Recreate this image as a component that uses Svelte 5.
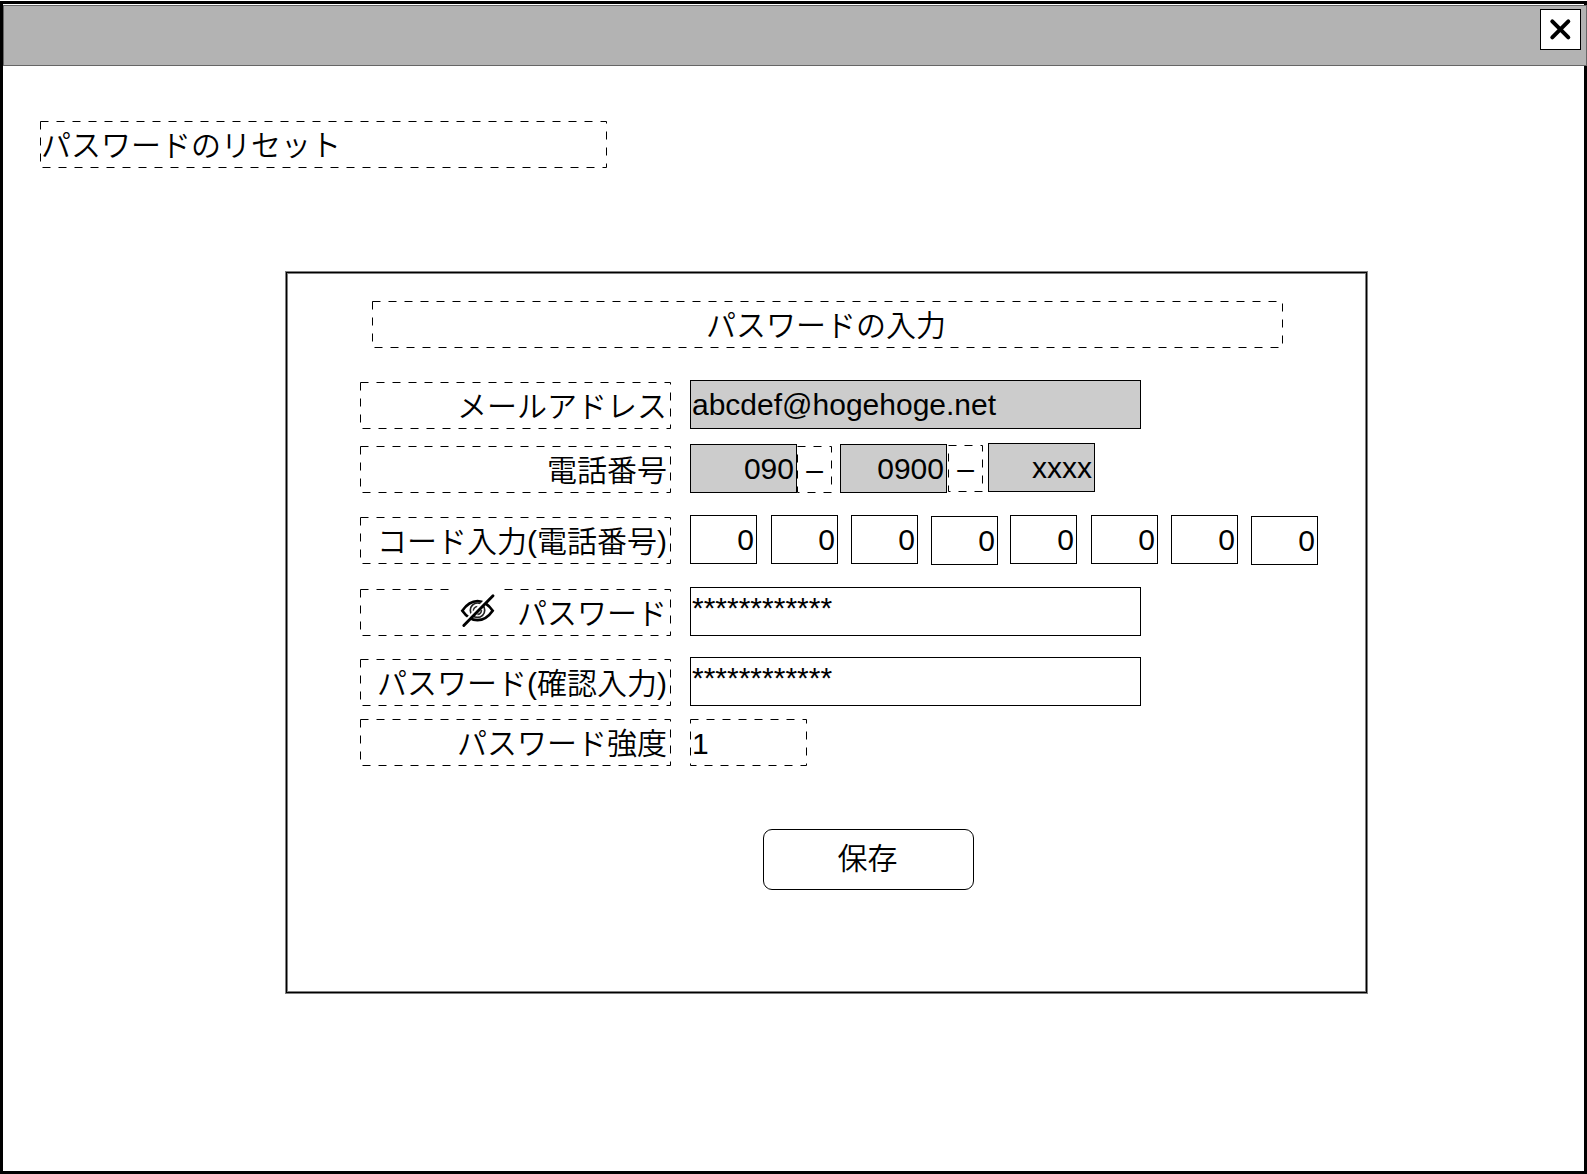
<script>
  const phone = [
    { kind: 'field', text: '090', gap: 0, drop: 1 },
    { kind: 'sep', text: '–', gap: 0, drop: 3 },
    { kind: 'field', text: '0900', gap: 8, drop: 1 },
    { kind: 'sep', text: '–', gap: 1, drop: 2 },
    { kind: 'field', text: 'xxxx', gap: 5, drop: 0 }
  ];
  const code = [
    { gap: 0, drop: 0 },
    { gap: 14, drop: 0 },
    { gap: 13, drop: 0 },
    { gap: 13, drop: 1 },
    { gap: 12, drop: 0 },
    { gap: 14, drop: 0 },
    { gap: 13, drop: 0 },
    { gap: 13, drop: 1 }
  ];
</script>

{#snippet outline(w)}
  <svg class="outline" width={w + 1} height="47" aria-hidden="true">
    <rect x="0.5" y="0.5" width={w} height="46" />
  </svg>
{/snippet}

{#snippet label(text)}
  <div class="dashed label">{@render outline(310)}<span>{text}</span></div>
{/snippet}

<div class="page">
  <main class="window">
    <header>
      <button class="close" aria-label="閉じる">
        <svg width="39" height="39" viewBox="0 0 39 39">
          <path d="M11.3 11.3 27.3 27.3M27.3 11.3 11.3 27.3" />
        </svg>
      </button>
    </header>

    <h1 class="dashed">{@render outline(566)}<span>パスワードのリセット</span></h1>

    <section class="panel">
      <h2 class="dashed">{@render outline(910)}<span>パスワードの入力</span></h2>

      <div class="rows">
        <div class="row">
          {@render label('メールアドレス')}
          <div class="field wide readonly"><span>abcdef@hogehoge.net</span></div>
        </div>

        <div class="row phone">
          {@render label('電話番号')}
          <div class="group">
            {#each phone as part}
              {#if part.kind === 'field'}
                <div class="field part readonly" style="margin-left:{part.gap}px;margin-top:{part.drop}px"><span>{part.text}</span></div>
              {:else}
                <div class="dashed sep" style="margin-left:{part.gap}px;margin-top:{part.drop}px">{@render outline(34)}<span>{part.text}</span></div>
              {/if}
            {/each}
          </div>
        </div>

        <div class="row">
          {@render label('コード入力(電話番号)')}
          <div class="group">
            {#each code as cell}
              <div class="field digit" style="margin-left:{cell.gap}px;margin-top:{cell.drop}px"><span>0</span></div>
            {/each}
          </div>
        </div>

        <div class="row">
          <div class="dashed label">
            {@render outline(310)}
            <svg class="eye" width="53" height="44" viewBox="0 0 53 44" aria-hidden="true">
              <path d="M12.3 24.7Q19 15.2 27.5 15.2T42.7 24.7Q36 34.2 27.5 34.2T12.3 24.7Z" stroke-width="2.7" />
              <circle cx="27.5" cy="24.2" r="7.2" stroke="#222" stroke-width="1.7" />
              <path d="M23.6 25.4a4 4 0 0 1 3.8-4.8M31.4 24a4 4 0 0 1-4 4.4" stroke="#333" stroke-width="1.6" />
              <path d="M12.6 38.4 41.4 8.8" stroke="#fff" stroke-width="3.4" />
              <path d="M13.8 39.4 43 9.8" stroke-width="2.9" stroke-linecap="round" />
            </svg>
            <span>パスワード</span>
          </div>
          <div class="field wide mask"><span>************</span></div>
        </div>

        <div class="row">
          {@render label('パスワード(確認入力)')}
          <div class="field wide mask"><span>************</span></div>
        </div>

        <div class="row strength">
          {@render label('パスワード強度')}
          <div class="dashed value">{@render outline(116)}<span>1</span></div>
        </div>
      </div>

      <button class="save">保存</button>
    </section>
  </main>
</div>

<style>
  :global(body) {
    background: #fff;
  }

  .page,
  .page * {
    box-sizing: border-box;
  }

  .page {
    width: 1587px;
    height: 1174px;
    padding-top: 1px;
    overflow: hidden;
    color: #000;
    font: 350 30px/36px 'Liberation Sans', 'Noto Sans CJK JP', sans-serif;
  }

  .window {
    height: 1173px;
    border: 3px solid #000;
  }

  header {
    display: flex;
    justify-content: flex-end;
    height: 61px;
    margin: 1px -3px 0 0;
    padding: 3px 5px 0 0;
    border: 1px solid #666;
    background: #b3b3b3;
  }

  .close {
    width: 41px;
    height: 41px;
    padding: 0;
    border: 1px solid #000;
    background: #fff;
  }

  .close svg {
    display: block;
  }

  .close path {
    fill: none;
    stroke: #000;
    stroke-width: 4;
    stroke-linecap: round;
  }

  .dashed {
    position: relative;
    display: flex;
    flex: none;
    align-items: center;
    height: 47px;
    padding: 2px 4px 0 1px;
    white-space: nowrap;
  }

  .outline {
    position: absolute;
    left: 0;
    top: 0;
  }

  .outline rect {
    fill: none;
    stroke: #000;
    stroke-dasharray: 8 8;
  }

  h1,
  h2 {
    font: inherit;
  }

  h1 {
    width: 567px;
    margin: 55px 0 0 37px;
  }

  .panel {
    width: 1081px;
    height: 721px;
    margin: 104px 0 0 283px;
    border: 1px solid #000;
    box-shadow: 0 0 0 1px #808080, inset 0 0 0 1px #808080;
    display: flow-root;
  }

  h2 {
    width: 911px;
    margin: 28px 0 0 85px;
    justify-content: center;
  }

  .rows {
    display: grid;
    grid-template-rows: 63px 72px 72px 70px 62px 47px;
    margin: 32px 0 0 73px;
  }

  .row {
    display: flex;
    align-items: flex-start;
    gap: 19px;
  }

  .group {
    display: flex;
    align-items: flex-start;
  }

  .label {
    width: 311px;
    margin-top: 2px;
    justify-content: flex-end;
  }

  .phone .label {
    margin-top: 3px;
  }

  .strength .label {
    margin-top: 0;
  }

  .eye {
    position: absolute;
    left: 90px;
    top: -3px;
    background: #fff;
    fill: none;
    stroke: #000;
  }

  .field {
    display: flex;
    flex: none;
    align-items: center;
    height: 49px;
    padding: 0 2px 0 1px;
    border: 1px solid #000;
    background: #fff;
    white-space: nowrap;
  }

  .readonly {
    background: #ccc;
  }

  .wide {
    width: 451px;
  }

  .mask {
    padding-bottom: 7px;
  }

  .part {
    width: 107px;
    justify-content: flex-end;
  }

  .digit {
    width: 67px;
    justify-content: flex-end;
  }

  .sep {
    width: 35px;
    padding: 0 2px;
    justify-content: center;
  }

  .value {
    width: 117px;
    padding-left: 2px;
  }

  .save {
    display: flex;
    align-items: center;
    justify-content: center;
    width: 211px;
    height: 61px;
    margin: 63px 0 0 476px;
    padding: 0 2px 2px 0;
    border: 1px solid #000;
    border-radius: 9px;
    background: #fff;
    color: #000;
    font: inherit;
  }
</style>
